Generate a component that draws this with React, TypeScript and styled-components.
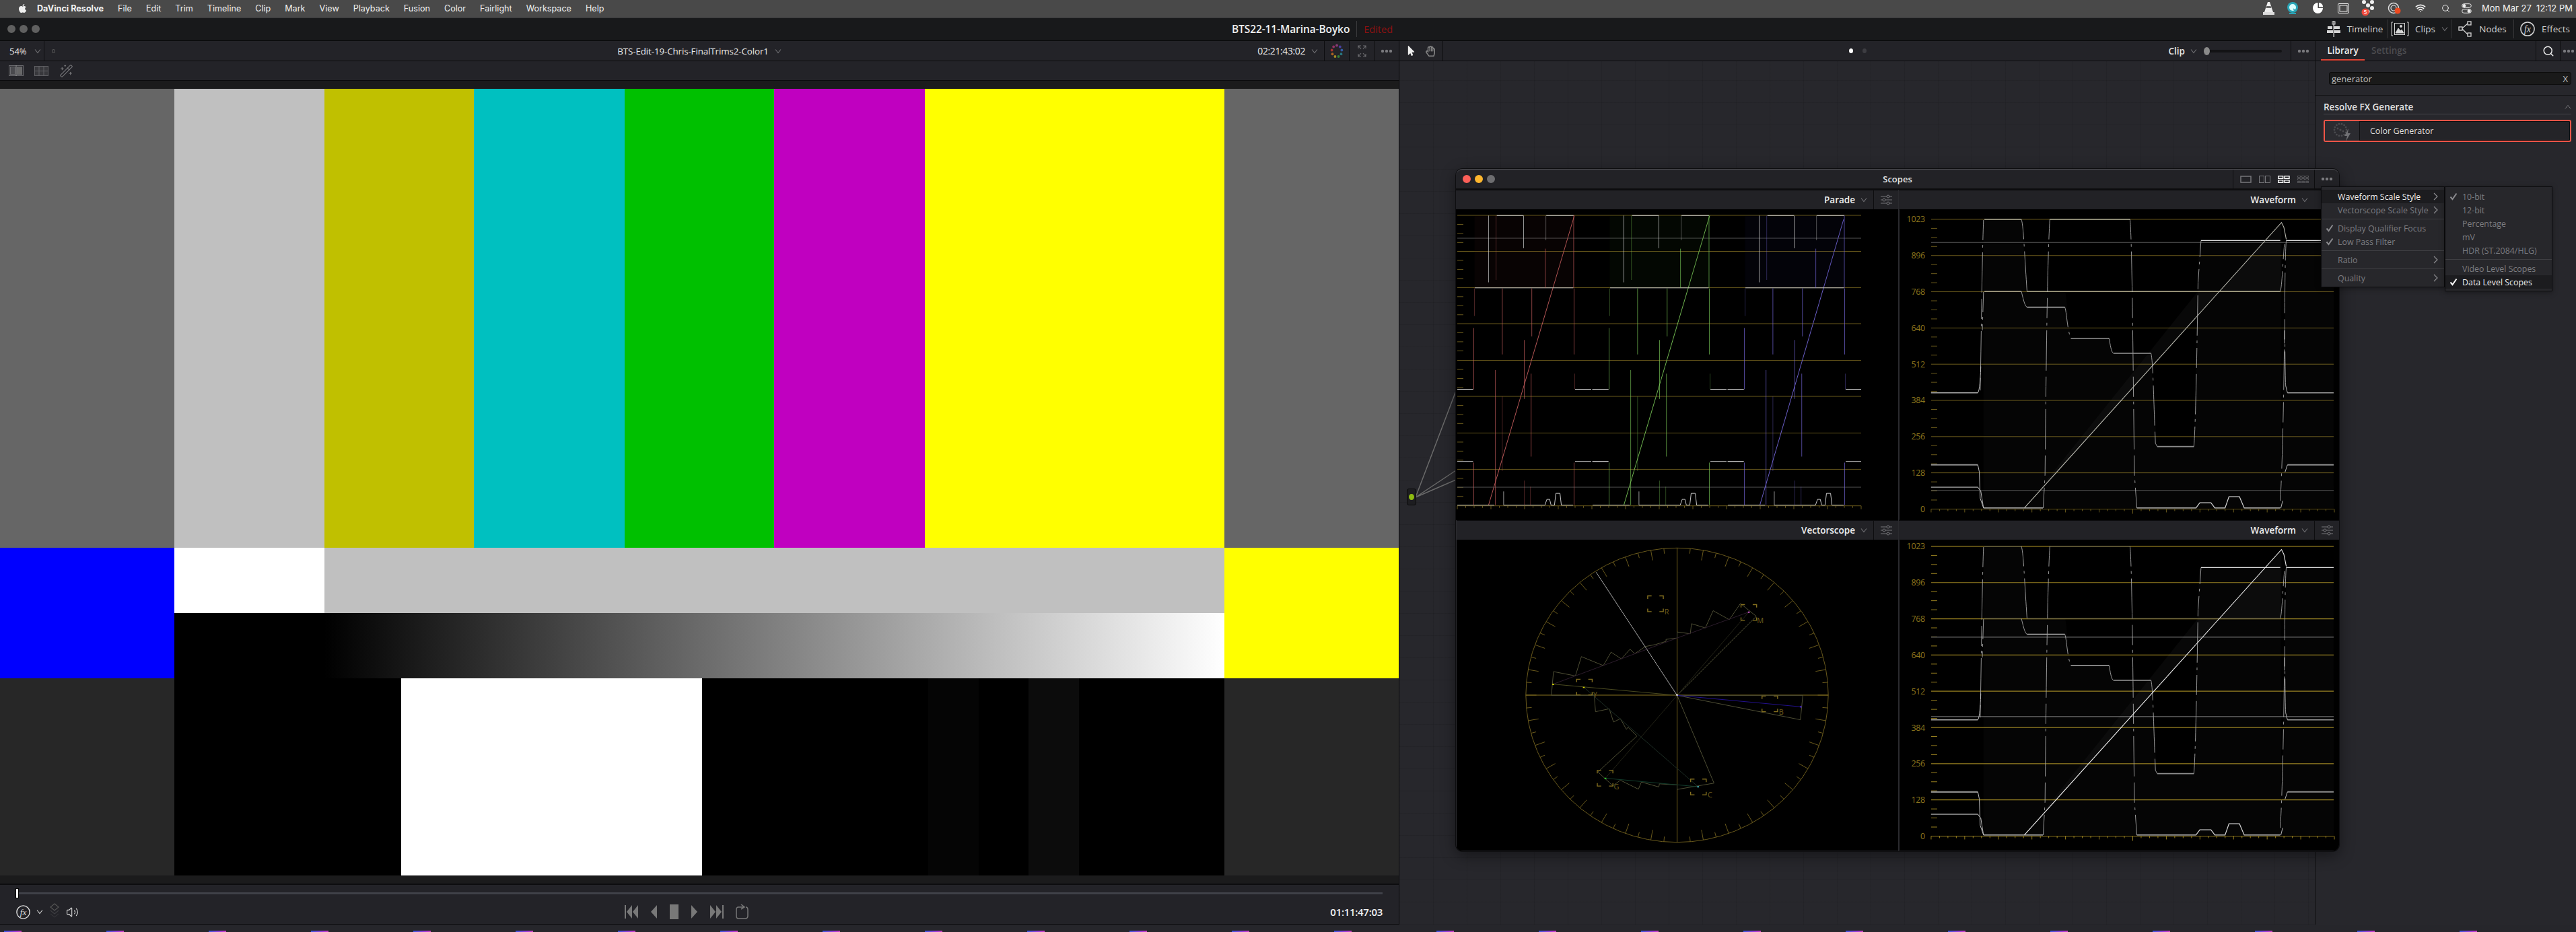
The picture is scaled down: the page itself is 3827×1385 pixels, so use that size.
import React from 'react';
import styled, { createGlobalStyle } from 'styled-components';
import { FaApple, FaMousePointer, FaRegHandPaper } from 'react-icons/fa';
import { Search, Wifi, WandSparkles, Volume2 } from 'lucide-react';

const Global = createGlobalStyle`
  html, body { margin: 0; padding: 0; background: #26262b; overflow: hidden; }
  * { box-sizing: border-box; }
  #root { width: 3827px; height: 1385px; }
`;

const UI = `"Open Sans", "Noto Sans", sans-serif`;

const Page = styled.div`
  width: 3827px; height: 1385px; display: flex; flex-direction: column; overflow: hidden;
  font-family: ${UI}; color: #ddd; background: #26262b;
`;

/* ---------- macOS menu bar ---------- */
const MenuBar = styled.div`
  height: 26px; flex: none; display: flex; align-items: center; padding: 0 5px 1px 26px;
  background: #494949; border-bottom: 1px solid #6c6c6c; font-family: Inter, sans-serif; font-size: 12.6px; color: #f0f0f0;
`;
const MenuItems = styled.div`display: flex; gap: 21px; align-items: center; margin-left: 14px;`;
const AppName = styled.span`font-weight: 700;`;
const Tray = styled.div`margin-left: auto; display: flex; align-items: center; color: #f2f2f2;`;
const TraySlot = styled.span<{ $w: number }>`
  width: ${p => p.$w}px; display: flex; align-items: center; justify-content: center; position: relative;
`;
const Clock = styled.span`margin-left: 10px; white-space: pre; font-size: 13px;`;

/* ---------- project title bar ---------- */
const TitleBar = styled.div`
  height: 35px; flex: none; display: flex; align-items: center; background: #18191b; border-bottom: 1px solid #08080a; position: relative;
`;
const TitleLeft = styled.div`width: 1830px; flex: none; display: flex; gap: 6px; padding-left: 11px;`;
const GreyDot = styled.span`width: 12px; height: 12px; border-radius: 50%; background: #606060;`;
const ProjectName = styled.span`font-size: 15.5px; font-weight: 600; color: #eee; letter-spacing: -0.1px;`;
const Sep = styled.span`width: 1px; height: 24px; background: #3a3a3c; margin: 0 10px;`;
const Edited = styled.span`font-size: 14.5px; color: #8d1111;`;
const PageTabs = styled.div`margin-left: auto; display: flex; align-items: center; height: 100%; font-size: 13.5px; color: #cfcfcf;`;
const PageTab = styled.div<{ $w: number; $gap?: number }>`
  width: ${p => p.$w}px; height: 28px; display: flex; align-items: center; justify-content: center; gap: ${p => p.$gap ?? 10}px;
  & + & { border-left: 1px solid #38383a; }
`;
const Chev = styled.svg`flex: none;`;

/* ---------- main ---------- */
const Main = styled.div`flex: 1; display: flex; position: relative; min-height: 0;`;
const ViewerCol = styled.div`width: 2079px; flex: none; display: flex; flex-direction: column; border-right: 1px solid #0e0e10; background: #232328;`;
const NodeCol = styled.div`width: 1361px; flex: none; display: flex; flex-direction: column; border-right: 1px solid #0e0e10;`;
const InspectorCol = styled.div`flex: 1; display: flex; flex-direction: column; background: #27272c;`;

const Toolbar = styled.div`height: 30px; flex: none; background: #232328; border-bottom: 1px solid #0b0b0d;`;
const ViewerToolbar = styled(Toolbar)`display: grid; grid-template-columns: 1fr auto 1fr; align-items: stretch;`;
const ToolLeft = styled.div`display: flex; align-items: center;`;
const ZoomCell = styled.div`width: 66px; height: 100%; display: flex; align-items: center; gap: 11px; padding-left: 14px; border-right: 1px solid #0d0d0f; font-size: 13px; color: #e6e6e6;`;
const TinyDot = styled.span`width: 5px; height: 6px; border-radius: 50%; border: 1px solid #555; margin-left: 11px;`;
const ClipTitle = styled.div`display: flex; align-items: center; gap: 9px; font-size: 13.4px; color: #e9e9e9; letter-spacing: -0.12px;`;
const ToolRight = styled.div`display: flex; justify-content: flex-end; align-items: center;`;
const Timecode = styled.div`display: flex; align-items: center; gap: 9px; font-size: 14px; font-weight: 500; color: #eee; padding-right: 9px; letter-spacing: -0.4px;`;
const ToolCell = styled.div<{ $w: number; $push?: boolean }>`
  width: ${p => p.$w}px; height: 100%; display: flex; align-items: center; justify-content: center; border-left: 1px solid #0d0d0f; flex: none;
  margin-left: ${p => (p.$push ? 'auto' : '0')};
`;
const SubBar = styled.div`height: 29px; flex: none; background: #232328; border-bottom: 1px solid #0b0b0d; display: flex; align-items: center; gap: 16px; padding-left: 13px;`;
const Strip = styled.div`height: 12px; flex: none; background: #1b1b1c;`;

/* ---------- colour bars ---------- */
const Video = styled.div`
  height: 1169px; flex: none; background: #000; display: grid;
  grid-template-columns: 259px 223px 222px 224px 222px 224px 445px 259px;
  grid-template-rows: 682px 97px 97px 293px;
`;
const Bar = styled.div<{ $c: string; $col?: string; $row?: string }>`
  background: ${p => p.$c}; grid-column: ${p => p.$col ?? 'auto'}; grid-row: ${p => p.$row ?? 'auto'};
`;
const PlugeRow = styled.div`
  grid-column: 2 / 8; grid-row: 4; display: grid; grid-template-columns: 337px 447px 336px 75px 74px 75px 216px; background: #000;
`;
const PlugeCell = styled.div<{ $c: string }>`background: ${p => p.$c};`;

/* ---------- transport ---------- */
const Transport = styled.div`
  height: 61px; flex: none; background: #232328; border-top: 2px solid #0d0d0f; border-bottom: 1px solid #0d0d0f; padding: 0 24px;
  display: flex; flex-direction: column;
`;
const Scrub = styled.div`height: 3px; background: #3f4148; margin-top: 11px; position: relative; flex: none;`;
const Playhead = styled.span`position: absolute; left: 0; top: -5px; width: 3px; height: 13px; background: #fff; outline: 1px solid #000;`;
const TransportRow = styled.div`display: grid; grid-template-columns: 904px auto 1fr; align-items: center; margin-top: 12px;`;
const Audio = styled.div`display: flex; align-items: center; gap: 9px; color: #ddd;`;
const PlayBtns = styled.div`display: flex; align-items: center; gap: 18px; color: #777;`;
const EndTC = styled.div`justify-self: end; font-size: 15px; font-weight: 600; color: #f0f0f0; letter-spacing: -0.3px;`;

/* ---------- node canvas ---------- */
const NodeBar = styled(Toolbar)`display: flex; align-items: center; position: relative;`;
const ToolsCell = styled.div`width: 65px; height: 100%; border-right: 1px solid #0d0d0f; display: flex; align-items: center; justify-content: center; gap: 13px;`;
const PageDots = styled.div`margin-left: 603px; display: flex; gap: 14px; align-items: center;`;
const PageDot = styled.span<{ $on?: boolean }>`width: 6px; height: 7px; border-radius: 50%; background: ${p => (p.$on ? '#fff' : '#3d3d42')};`;
const ClipCtl = styled.div`margin-left: auto; display: flex; align-items: center; height: 100%; font-size: 13.5px; color: #e6e6e6;`;
const ClipLabel = styled.span`display: flex; align-items: center; gap: 8px; font-weight: 600;`;
const SliderTrack = styled.div`width: 112px; height: 4px; background: #131315; border-radius: 2px; margin: 0 13px 0 14px; position: relative;`;
const SliderKnob = styled.span`position: absolute; left: -4px; top: -4px; width: 9px; height: 12px; border-radius: 50%; background: #8a8a8a;`;
const Canvas = styled.div`
  flex: 1; position: relative; background-color: #27272c;
  background-image:
    repeating-linear-gradient(90deg, rgba(0,0,0,.09) 0 1px, transparent 1px 50px),
    repeating-linear-gradient(0deg, rgba(0,0,0,.09) 0 1px, transparent 1px 33px);
`;
const Wires = styled.svg`position: absolute; left: 0; top: 0; pointer-events: none;`;
const Node = styled.div`
  position: absolute; left: 11px; top: 635px; width: 14px; height: 25px; border-radius: 3px; background: #1d1d20; border: 1px solid #0a0a0a;
  display: flex; align-items: center; justify-content: center;
`;
const NodeDot = styled.span`width: 8px; height: 9px; border-radius: 50%; background: #8dbb10;`;

/* ---------- inspector ---------- */
const InspectorBar = styled(Toolbar)`display: flex; align-items: stretch;`;
const Tab = styled.div<{ $on?: boolean }>`
  display: flex; align-items: center; justify-content: center; padding: 0 10px; font-size: 13.5px; font-weight: 600;
  color: ${p => (p.$on ? '#eee' : '#4c4c50')}; border-bottom: ${p => (p.$on ? '2px solid #e2493b' : '2px solid transparent')};
`;
const TabLib = styled(Tab)`margin-left: 8px; width: 65px;`;
const SearchArea = styled.div`height: 51px; flex: none; padding: 16px 7px 0 20px; border-bottom: 1px solid #0f0f11;`;
const SearchBox = styled.div`
  height: 19px; background: #1a1a1a; border: 1px solid #0c0c0c; border-radius: 3px; display: flex; align-items: center; justify-content: space-between;
  padding: 0 4px 0 3px; font-size: 13px; color: #bbb;
`;
const FxHead = styled.div`margin: 0 7px 0 12px; height: 28px; display: flex; align-items: center; justify-content: space-between; border-bottom: 1px solid #47474b; font-size: 13.5px; font-weight: 600; color: #e4e4e4; padding-top: 6px;`;
const FxRow = styled.div`
  margin: 8px 7px 0 12px; height: 33px; display: flex; align-items: stretch; border: 2px solid #ef5548; border-radius: 3px; background: #242428;
  font-size: 12.5px; color: #ddd; box-shadow: inset 0 0 0 1px #0e0e10;
`;
const FxThumb = styled.div`width: 52px; background: #2b2b30; border-right: 1px solid #0e0e10; display: flex; align-items: center; justify-content: center;`;
const FxName = styled.div`display: flex; align-items: center; padding-left: 15px;`;

/* ---------- scopes window ---------- */
const ScopesWin = styled.div`
  position: absolute; left: 2163px; top: 190px; width: 1312px; height: 1014px; background: #222226; border-radius: 10px;
  box-shadow: 0 0 0 1px #0e0e10, 0 6px 22px rgba(0,0,0,.45); display: flex; flex-direction: column; overflow: visible;
`;
const WinTitle = styled.div`
  height: 31px; flex: none; display: grid; grid-template-columns: 1fr auto 1fr; align-items: center; border-bottom: 2px solid #0c0c0e;
  border-top: 1px solid #505055; border-radius: 10px 10px 0 0; font-size: 13px; font-weight: 600; color: #e4e4e4;
`;
const Lights = styled.div`display: flex; gap: 6px; padding-left: 10px;`;
const Light = styled.span<{ $c: string }>`width: 12px; height: 12px; border-radius: 50%; background: ${p => p.$c};`;
const WinIcons = styled.div`justify-self: end; display: flex; align-items: center; height: 100%;`;
const LayoutCell = styled.div`width: 121px; height: 100%; display: flex; align-items: center; justify-content: center; gap: 11px; border-left: 1px solid #0d0d0f; padding-left: 2px;`;
const MoreCell = styled.div`width: 37px; height: 100%; display: flex; align-items: center; justify-content: center; border-left: 1px solid #0d0d0f;`;
const ScopeGrid = styled.div`flex: 1; display: grid; grid-template-columns: 657px 655px; grid-template-rows: 491px 491px; overflow: hidden; border-radius: 0 0 10px 10px;`;
const Scope = styled.div`display: flex; flex-direction: column; min-width: 0; & + & { border-left: 1px solid #2a2a2e; }`;
const ScopeHead = styled.div`height: 29px; flex: none; display: flex; justify-content: flex-end; align-items: center; background: #222226; border-top: 1px solid #0c0c0e; font-size: 13.5px; font-weight: 600; color: #eee;`;
const ScopeName = styled.div<{ $pad?: number }>`display: flex; align-items: center; gap: 8px; padding-right: ${p => p.$pad ?? 9}px; height: 100%;`;
const SlidersCell = styled.div`width: 37px; height: 100%; display: flex; align-items: center; justify-content: center; border-left: 1px solid #0d0d0f;`;
const ScopeBody = styled.svg`display: block; flex: 1; width: 100%; background: #000;`;

/* ---------- menu ---------- */
const MenuWrap = styled.div`position: absolute; left: 1285px; top: 26px; display: flex; align-items: flex-start; z-index: 3;`;
const Menu = styled.div<{ $w: number }>`
  width: ${p => p.$w}px; background: #27272b; border: 1px solid #0b0b0d; padding: 4px 0 3px; box-shadow: 0 2px 8px rgba(0,0,0,.35);
`;
const Row = styled.div<{ $hi?: boolean; $on?: boolean; $pad: number }>`
  height: 20px; display: flex; align-items: center; position: relative; padding-left: ${p => p.$pad}px; padding-right: 9px;
  color: ${p => (p.$on ? '#eee' : '#7c7c80')}; background: ${p => (p.$hi ? '#1c1c1f' : 'transparent')};
  font-size: 12.4px;
`;
const Arrow = styled.svg`margin-left: auto;`;
const Check = styled.svg<{ $x: number }>`position: absolute; left: ${p => p.$x}px; top: 4px;`;
const Divider = styled.div`height: 1px; background: #3f3f43; margin: 3px 0;`;

/* ---------- dock sliver ---------- */
const Dock = styled.div`height: 11px; flex: none; background: #26262b; display: flex; align-items: flex-end; gap: 126px; padding-left: 6px; overflow: hidden;`;
const DockIcon = styled.span`width: 26px; height: 2px; flex: none; background: linear-gradient(90deg, #3a55d8, #a23ad8 70%, #d040c0);`;

/* ---------- small drawings ---------- */
const Down = ({ c = '#6f6f73' }: { c?: string }) => (
  <Chev width="10" height="8" viewBox="0 0 10 8"><path d="M1 1.5 5 6.5 9 1.5" fill="none" stroke={c} strokeWidth="1.1" /></Chev>
);
const Dots = ({ c = '#7a7a7e' }: { c?: string }) => (
  <svg width="18" height="6" viewBox="0 0 18 6"><circle cx="3" cy="3" r="2.2" fill={c} /><circle cx="9" cy="3" r="2.2" fill={c} /><circle cx="15" cy="3" r="2.2" fill={c} /></svg>
);
const SliderIco = () => (
  <svg width="17" height="16" viewBox="0 0 17 16" stroke="#77777b" fill="#222226" strokeWidth="1">
    <path d="M0 3H17M0 8H17M0 13H17" /><circle cx="11" cy="3" r="2" /><circle cx="5" cy="8" r="2" /><circle cx="11" cy="13" r="2" />
  </svg>
);
const FxIcon = ({ s, c }: { s: number; c: string }) => (
  <svg width={s} height={s} viewBox="0 0 24 24"><circle cx="12" cy="12" r="11" fill="none" stroke={c} strokeWidth="1.6" />
    <text x="12" y="17" textAnchor="middle" fontFamily="'Liberation Serif', serif" fontStyle="italic" fontSize="15" fill={c}>fx</text></svg>
);
const ColorWheel = () => {
  const cols = ['#8a3a76', '#4a3fa0', '#325ca4', '#27767f', '#32803a', '#a68a24', '#ad6223', '#a73530', '#943265'];
  return (
    <svg width="20" height="22" viewBox="-10 -11 20 22">
      {cols.map((c, i) => { const a = (i / cols.length) * Math.PI * 2 - Math.PI / 2; return <circle key={c} cx={Math.cos(a) * 7.5} cy={Math.sin(a) * 8.5} r="1.9" fill={c} />; })}
    </svg>
  );
};
const ExpandIco = () => (
  <svg width="13" height="18" viewBox="0 0 13 18" fill="none" stroke="#6a6a6e" strokeWidth="1.2">
    <path d="M1 5V1H5M8 1H12V5M1 13V17H5M12 13V17H8M1 1 5 6M12 1 8 6M1 17 5 12M12 17 8 12" />
  </svg>
);
const DualIco = () => (
  <svg width="22" height="16" viewBox="0 0 22 16" fill="#4a4a4e" stroke="#6a6a6e" strokeWidth="1">
    <rect x=".5" y=".5" width="21" height="15" fill="#2e2e32" /><rect x="2.5" y="2.5" width="7" height="11" /><rect x="12.5" y="2.5" width="7" height="11" fill="#666" /><path d="M11 0V16" stroke="#999" />
  </svg>
);
const GridIco = () => (
  <svg width="21" height="15" viewBox="0 0 21 15" stroke="#606064" fill="#38383c"><rect x=".5" y=".5" width="20" height="14" /><path d="M7 .5V14.5M14 .5V14.5M.5 7.5H20.5" /></svg>
);
const TimelineIco = () => (
  <svg width="20" height="24" viewBox="0 0 20 24" fill="#d6d6d6"><rect x="9.5" y="0" width="1.4" height="24" /><rect x="8" y="1" width="4" height="4" fill="none" stroke="#d6d6d6" /><rect x="1" y="8" width="7" height="4" /><rect x="11" y="8" width="8" height="4" /><rect x="0" y="14" width="9" height="4" /><rect x="11" y="14" width="9" height="4" /></svg>
);
const ClipsIco = () => (
  <svg width="27" height="22" viewBox="0 0 27 22" fill="none" stroke="#d6d6d6"><path d="M3 1H1V21H3M24 1H26V21H24" /><rect x="5.5" y="2.5" width="15" height="17" /><path d="M7 17 11 10 14 14 16 12 19 17Z" fill="#d6d6d6" /><circle cx="15" cy="7" r="1.5" fill="#d6d6d6" /></svg>
);
const NodesIco = () => (
  <svg width="21" height="24" viewBox="0 0 21 24" fill="none" stroke="#d6d6d6" strokeWidth="1.3"><rect x="1" y="9" width="5" height="5" /><rect x="14" y="1" width="5" height="5" /><rect x="14" y="18" width="5" height="5" /><path d="M6 11 14 4M6 12 14 20" /></svg>
);
const FxThumbIco = () => (
  <svg width="30" height="30" viewBox="0 0 30 30"><g fill="#4a4a4e">{Array.from({ length: 14 }, (_, i) => { const a = i / 14 * Math.PI * 2; return <circle key={i} cx={12 + Math.cos(a) * 9} cy={13 + Math.sin(a) * 9} r="1.4" />; })}<circle cx="12" cy="13" r="1.6" /><circle cx="8" cy="11" r="1.4" /><circle cx="16" cy="15" r="1.4" /></g><path d="M24 11 18 22H22L20 30 27 18H23Z" fill="#707074" /></svg>
);
const Layers = () => (
  <svg width="16" height="28" viewBox="0 0 16 28" fill="none" stroke="#555" strokeWidth="1.2"><path d="M8 2 14 7 8 12 2 7Z" /><path d="M2 12 8 17 14 12" stroke="#3f3f43" /><path d="M2 17 8 22 14 17" stroke="#333337" /></svg>
);
const TIcon = ({ kind }: { kind: string }) => {
  const c = '#787878';
  const m: Record<string, React.ReactNode> = {
    first: <><rect x="0" y="1" width="2" height="20" fill={c} /><path d="M11 1 3 11 11 21ZM20 1 12 11 20 21Z" fill={c} /></>,
    prev: <path d="M10 1 1 11 10 21Z" fill={c} />,
    stop: <rect x="0" y="0" width="13" height="22" fill={c} />,
    next: <path d="M1 1 10 11 1 21Z" fill={c} />,
    last: <><rect x="18" y="1" width="2" height="20" fill={c} /><path d="M0 1 8 11 0 21ZM9 1 17 11 9 21Z" fill={c} /></>,
    loop: <path d="M12 4H4Q1 4 1 8V17Q1 21 4 21H14Q18 21 18 17V8Q18 4 15 4M8 0 13 4 8 7" fill="none" stroke={c} strokeWidth="1.5" />,
  };
  const w = kind === 'first' || kind === 'last' || kind === 'loop' ? 20 : kind === 'stop' ? 13 : 11;
  return <svg width={w} height="22" viewBox={`0 0 ${w} 22`}>{m[kind]}</svg>;
};

const LEVELS = ['1023', '896', '768', '640', '512', '384', '256', '128', '0'];

type Seg = { d: string; c: string; w: number; dimInBright?: boolean };
const SEGS: Seg[] = [
  { d: 'M152 960H308', c: '#aaa', w: 1.5 },
  { d: 'M152 1260H308', c: '#8c8c8c', w: 2.2 },
  { d: 'M152 1353H308', c: '#eee', w: 1.1 },
  { d: 'M330 237H453M548 237H815', c: '#e6e6da', w: 1.1, dimInBright: true },
  { d: 'M330 537H453M472 537H1316', c: '#e2e2d6', w: 1.1, dimInBright: true },
  { d: 'M472 603H598', c: '#b0b0b0', w: 1.4 },
  { d: 'M618 732H745', c: '#eee', w: 1.1 },
  { d: 'M760 795H885', c: '#9a9a9a', w: 1.6 },
  { d: 'M906 1184H1028', c: '#8c8c8c', w: 1.8 },
  { d: 'M1052 325H1316M1336 325H1494', c: '#d8d8d8', w: 1.2 },
  { d: 'M1340 960H1494', c: '#999', w: 1.5 },
  { d: 'M1340 1260H1494', c: '#8c8c8c', w: 2 },
  { d: 'M327 1440H525M838 1440H1035L1048 1418H1085L1098 1440H1132L1145 1393H1180L1196 1440H1316', c: '#d4d4d4', w: 1.2 },
  { d: 'M308 960C313 950 316 920 318 850M308 1260 313 1290M308 1353 318 1370 327 1440M313 1290 316 1400 327 1440M1340 960 1334 930M1340 1260 1332 1290M1318 1440 1324 1410', c: '#bbb', w: 1 },
];
const EDGES = [
  'M327 240C322 400 320 700 316 950',
  'M327 540 323 700',
  'M548 237C540 400 536 800 532 1300L526 1440',
  'M815 237C822 300 825 800 830 1300L838 1440',
  'M453 237C460 260 462 350 472 537',
  'M453 537C458 560 464 600 472 603',
  'M598 603C604 620 606 700 618 732',
  'M745 732C750 760 752 790 760 795',
  'M885 795C892 820 894 1000 900 1170L906 1184',
  'M1028 1184C1034 1100 1038 800 1042 500L1052 325',
  'M1316 1410C1322 1300 1328 1000 1330 700',
  'M1336 325C1330 400 1330 800 1334 930',
  'M1316 537C1322 520 1325 400 1330 340',
];

const Waveform = ({ y0, bright }: { y0: number; bright: boolean }) => {
  const top = y0 + 14.6;
  const step = 53.9;
  const grid = bright ? '#9a8220' : '#6a5a1c';
  const gray = bright ? '#8c8c8c' : '#555';
  const grayY = bright ? [947.7, 1066] : [y0 + 49, y0 + 418];
  const ticks: React.ReactNode[] = [];
  LEVELS.forEach((l, i) => {
    const y = top + i * step;
    ticks.push(<line key={l} x1="2868" x2="3467" y1={y} y2={y} stroke={grid} strokeWidth={bright ? 1.2 : 1} />);
    ticks.push(<text key={`t${l}`} x="2859" y={y + 4.5} textAnchor="end" fontFamily={UI} fontSize="12.5" fill="#8d751d" letterSpacing="-0.3">{l}</text>);
    if (i < 8) [1, 2, 3].forEach(k => ticks.push(<line key={`${l}-${k}`} x1="2868" x2="2877" y1={y + k * step / 4} y2={y + k * step / 4} stroke={grid} />));
  });
  const base = top + 8 * step;
  for (let k = 0; k <= 48; k++) {
    const x = 2868 + k * 12.5;
    const len = k === 24 ? 7 : k % 4 === 0 ? 5 : 3;
    ticks.push(<line key={`x${k}`} x1={x} x2={x} y1={base} y2={base + len} stroke={grid} />);
  }
  return (
    <>
      {ticks}
      {grayY.map(y => <line key={y} x1="2868" x2="3467" y1={y} y2={y} stroke={gray} />)}
      <g transform={`translate(2800 ${y0 - 70}) scale(${1 / 2.24} ${1 / 2.8})`} fill="none">
        <path d="M327 1440V240H455L472 540H600L618 735H750L760 800H885L905 1185H1028L1045 330H1316L1320 1440L1336 325H1494V1440Z" fill="rgba(255,255,255,.018)" stroke="none" />
        <path d="M463 1440 1320 250V540L1040 540Z" fill="rgba(255,255,255,.03)" stroke="none" />
        {EDGES.map(d => (
          <path key={d} d={d} stroke="#a8a8a8" strokeWidth=".9" strokeDasharray="30 7 4 7 60 9" vectorEffect="non-scaling-stroke" />
        ))}
        {SEGS.map(s => (
          <path key={s.d} d={s.d} stroke={s.dimInBright && bright ? '#56564e' : s.c} strokeWidth={s.w} vectorEffect="non-scaling-stroke" />
        ))}
        <path d="M463 1440L1320 250L1328 270L1336 320" stroke={bright ? '#eee' : '#b8b8ae'} strokeWidth="1.1" vectorEffect="non-scaling-stroke" />
      </g>
    </>
  );
};

const CHANNELS = [
  { dx: 0, c: '#c96060', dim: '#5a2020', ramp: 'M238 1427L488 222' },
  { dx: 394, c: '#7ac858', dim: '#234a1a', ramp: 'M632 1427L882 222' },
  { dx: 788, c: '#7568dc', dim: '#241f60', ramp: 'M1028 1427L1272 238' },
];
const VERTS: [number, number, number][] = [
  [197, 525, 640], [195, 690, 945], [238, 222, 500], [260, 222, 490], [258, 865, 1427], [278, 525, 800], [278, 975, 1285], [340, 222, 358],
  [342, 740, 985], [342, 1325, 1427], [362, 880, 1225], [364, 525, 725], [405, 222, 325], [403, 360, 523], [487, 525, 800], [489, 880, 945], [486, 222, 523],
  [282, 1370, 1427], [360, 1350, 1427], [195, 1250, 1427], [487, 1250, 1427],
];

const Parade = () => {
  const gy = [319, 372.5, 426.4, 480, 534.6, 588, 642.5, 696.4, 750.7];
  const grid = '#6a5a1c';
  return (
    <ScopeBody viewBox="2163 310 657 462">
      <defs><clipPath id="paradeClip"><rect x="2163" y="310" width="602" height="462" /></clipPath></defs>
      {gy.map((y, i) => (
        <g key={y}>
          <line x1="2165" x2="2765" y1={y} y2={y} stroke={grid} />
          {i < 8 && [1, 2, 3].map(k => <line key={k} x1="2165" x2="2174" y1={y + k * 13.45} y2={y + k * 13.45} stroke={grid} />)}
        </g>
      ))}
      {Array.from({ length: 49 }, (_, k) => { const x = 2165 + k * 12.5; return <line key={k} x1={x} x2={x} y1="750.7" y2={750.7 + (k % 4 === 0 ? 5 : 3)} stroke={grid} />; })}
      <line x1="2165" x2="2765" y1="353" y2="353" stroke="#555" />
      <line x1="2165" x2="2765" y1="723" y2="723" stroke="#555" />
      <g clipPath="url(#paradeClip)">
        <g transform={`translate(2090 240) scale(${1 / 1.96} ${1 / 2.8})`}>
          {CHANNELS.map(ch => (
            <g key={ch.dx}>
              <path d={ch.ramp} stroke={ch.c} strokeWidth=".9" vectorEffect="non-scaling-stroke" fill="none" />
              <g transform={`translate(${ch.dx} 0)`}>
                <rect x="197" y="222" width="290" height="301" fill={ch.dim} opacity=".09" />
                <path d="M262 222H339M406 222H486M198 523H485M147 945H193M490 945H537M540 945H587M147 1245H193M490 1245H537M540 1245H587M147 1427H255M282 1427H402L408 1403H416L420 1427H430L434 1378H446L450 1427H484"
                  stroke="#c8c8c8" strokeWidth="1" vectorEffect="non-scaling-stroke" fill="none" />
                {VERTS.map(([x, a, b], i) => (
                  <line key={i} x1={x} x2={x} y1={a} y2={b} stroke={i % 5 === 2 ? '#ddd' : ch.c} strokeWidth=".8" vectorEffect="non-scaling-stroke" opacity={i % 3 === 0 ? 0.45 : 0.85} />
                ))}
              </g>
            </g>
          ))}
        </g>
      </g>
    </ScopeBody>
  );
};

const Target = ({ x, y }: { x: number; y: number }) => {
  const hw = 26; const hh = 35; const a = 13;
  const s = (sx: number, sy: number) => `M${x + sx * hw} ${y + sy * (hh - a)}V${y + sy * hh}H${x + sx * (hw - a)}`;
  return <path d={`${s(-1, -1)}${s(1, -1)}${s(-1, 1)}${s(1, 1)}`} fill="none" stroke="#85701f" strokeWidth="1.4" vectorEffect="non-scaling-stroke" />;
};

const Vector = () => {
  const cx = 2491; const cy = 1034; const rx = 225; const ry = 219;
  const col = '#6a5a1c';
  const ticks = Array.from({ length: 72 }, (_, i) => {
    const a = (i * 5 * Math.PI) / 180;
    const l = i % 2 === 0 ? 0.07 : 0.035;
    return (
      <line key={i} x1={cx + Math.cos(a) * rx} y1={cy + Math.sin(a) * ry} x2={cx + Math.cos(a) * rx * (1 - l)} y2={cy + Math.sin(a) * ry * (1 - l)} stroke={col} />
    );
  });
  const labels: [string, number, number][] = [['R', 722, 432], ['M', 1030, 470], ['Y', 484, 802], ['B', 1103, 880], ['G', 553, 1212], ['C', 866, 1250]];
  const dots: [number, number, string][] = [[351, 743, '#ff0'], [453, 757, '#dd0'], [1003, 421, '#f6f'], [1176, 844, '#5a2cff'], [525, 1163, '#2fe02f'], [834, 1201, '#4fd8e8'], [764, 791, '#fff']];
  return (
    <ScopeBody viewBox="2163 803 657 462">
      <ellipse cx={cx} cy={cy} rx={rx} ry={ry} fill="none" stroke={col} />
      {ticks}
      <line x1={cx} x2={cx} y1={cy - ry} y2={cy + ry} stroke="#7e6a1d" />
      <line x1={cx - rx} x2={cx + rx} y1={cy} y2={cy} stroke="#8a7520" strokeWidth="1.2" />
      <g transform={`translate(2150 770) scale(${1 / 2.24} ${1 / 3})`} fill="none">
        <path d="M345 793L352 687L425 706L445 620L518 660L544 600L578 630L607 587L623 607L658 575L692 566L727 552V543L764 537V510L808 518L812 473L858 492L884 415L938 455L975 383L1028 440L764 793L1175 902L1183 793H764L887 1185L764 1213V1193L705 1188L703 1202L645 1180L635 1212L575 1172L550 1197L500 1135L630 975L600 935L595 945L575 897L552 912L538 853L492 866L488 793Z"
          stroke="#4e4e34" strokeWidth="1" vectorEffect="non-scaling-stroke" />
        <path d="M494 243L764 793" stroke="#a8a8a8" strokeWidth="1" vectorEffect="non-scaling-stroke" />
        <path d="M351 743L764 793" stroke="#4a4a20" vectorEffect="non-scaling-stroke" />
        <path d="M351 743L764 537L1003 421" stroke="#2c1c2c" vectorEffect="non-scaling-stroke" />
        <path d="M1003 421L764 793L525 1163" stroke="#222216" vectorEffect="non-scaling-stroke" />
        <path d="M764 793L1176 844" stroke="#22108c" vectorEffect="non-scaling-stroke" />
        <path d="M525 1163L834 1201" stroke="#123c2c" vectorEffect="non-scaling-stroke" />
        <path d="M453 757L834 1201" stroke="#1c2c24" vectorEffect="non-scaling-stroke" />
        <Target x={692} y={384} />
        <Target x={1003} y={423} />
        <Target x={455} y={756} />
        <Target x={1073} y={831} />
        <Target x={524} y={1163} />
        <Target x={835} y={1202} />
        {dots.map(([x, y, c]) => <rect key={c} x={x - 3} y={y - 2} width="6" height="5" fill={c} />)}
      </g>
      {labels.map(([t, x, y]) => (
        <text key={t} x={2150 + x / 2.24} y={770 + y / 3} fontFamily={UI} fontSize="11" fill="#6d5c1d">{t}</text>
      ))}
    </ScopeBody>
  );
};

const Right = () => <Arrow width="7" height="12" viewBox="0 0 7 12"><path d="M1 1 6 6 1 11" fill="none" stroke="#8a8a8e" strokeWidth="1.2" /></Arrow>;
const Tick = ({ x, c }: { x: number; c: string }) => (
  <Check $x={x} width="12" height="12" viewBox="0 0 12 12"><path d="M1.5 6.5 4.5 10 10.5 1.5" fill="none" stroke={c} strokeWidth="2" /></Check>
);

export default function App() {
  return (
    <Page>
      <Global />
      <MenuBar>
        <FaApple size={15} />
        <MenuItems>
          <AppName>DaVinci Resolve</AppName>
          {['File', 'Edit', 'Trim', 'Timeline', 'Clip', 'Mark', 'View', 'Playback', 'Fusion', 'Color', 'Fairlight', 'Workspace', 'Help'].map(m => <span key={m}>{m}</span>)}
        </MenuItems>
        <Tray>
          <TraySlot $w={36}><svg width="17" height="19" viewBox="0 0 17 19"><path d="M7 0H10L15 15H2Z" fill="#eee" /><rect x="0" y="15" width="17" height="4" fill="#ddd" /><path d="M5.5 6H11.5L12.5 9H4.5Z" fill="#666" /></svg></TraySlot>
          <TraySlot $w={36}><svg width="16" height="20" viewBox="0 0 16 20"><circle cx="8" cy="9" r="8" fill="#2aa6b8" /><circle cx="8" cy="9" r="5" fill="#dff" /><path d="M3 18H13" stroke="#2aa6b8" strokeWidth="2" /><path d="M9 11 12 14" stroke="#2aa6b8" strokeWidth="1.5" /></svg></TraySlot>
          <TraySlot $w={38}><svg width="15" height="16" viewBox="0 0 15 16"><path d="M7.5 0A7.5 8 0 1 0 15 8H7.5Z" fill="#fff" /><path d="M9 0A6 6 0 0 1 15 6.5H9Z" fill="#fff" /></svg></TraySlot>
          <TraySlot $w={38}><svg width="17" height="15" viewBox="0 0 17 15" fill="none" stroke="#eee"><rect x=".5" y=".5" width="16" height="14" rx="1.5" /><rect x="3" y="3" width="11" height="9" /></svg></TraySlot>
          <TraySlot $w={36}><svg width="20" height="26" viewBox="0 0 20 26"><g fill="#eee"><circle cx="4" cy="4" r="3" /><circle cx="16" cy="4" r="3" /><circle cx="10" cy="9" r="3" /><circle cx="16" cy="13" r="3" /><circle cx="10" cy="18" r="2.5" /></g><circle cx="6" cy="19" r="5.5" fill="#ef4a3c" /><text x="6" y="22" textAnchor="middle" fontSize="8" fill="#fff" fontFamily="Inter, sans-serif">5</text></svg></TraySlot>
          <TraySlot $w={41}><svg width="20" height="18" viewBox="0 0 20 18"><circle cx="9" cy="9" r="7.5" fill="none" stroke="#ddd" strokeWidth="1.5" /><circle cx="9" cy="9" r="4" fill="none" stroke="#ddd" strokeWidth="1.2" /><circle cx="15" cy="13" r="4.5" fill="#ee4a20" /></svg></TraySlot>
          <TraySlot $w={38}><Wifi size={16} strokeWidth={2.4} /></TraySlot>
          <TraySlot $w={36}><Search size={13} strokeWidth={1.8} /></TraySlot>
          <TraySlot $w={26}><svg width="15" height="15" viewBox="0 0 15 15" fill="none" stroke="#eee"><rect x=".7" y=".7" width="13.6" height="5.6" rx="2.8" /><rect x=".7" y="8.7" width="13.6" height="5.6" rx="2.8" /><circle cx="4" cy="3.5" r="2" fill="#eee" /><circle cx="11" cy="11.5" r="2" fill="#eee" /></svg></TraySlot>
          <Clock>Mon Mar 27  12:12 PM</Clock>
        </Tray>
      </MenuBar>

      <TitleBar>
        <TitleLeft><GreyDot /><GreyDot /><GreyDot /></TitleLeft>
        <ProjectName>BTS22-11-Marina-Boyko</ProjectName>
        <Sep />
        <Edited>Edited</Edited>
        <PageTabs>
          <PageTab $w={97}><TimelineIco />Timeline</PageTab>
          <PageTab $w={94} $gap={9}><ClipsIco />Clips<Down /></PageTab>
          <PageTab $w={93}><NodesIco />Nodes</PageTab>
          <PageTab $w={93}><FxIcon s={22} c="#d6d6d6" />Effects</PageTab>
        </PageTabs>
      </TitleBar>

      <Main>
        <ViewerCol>
          <ViewerToolbar>
            <ToolLeft><ZoomCell>54%<Down /></ZoomCell><TinyDot /></ToolLeft>
            <ClipTitle>BTS-Edit-19-Chris-FinalTrims2-Color1<Down /></ClipTitle>
            <ToolRight>
              <Timecode>02:21:43:02<Down /></Timecode>
              <ToolCell $w={37}><ColorWheel /></ToolCell>
              <ToolCell $w={37}><ExpandIco /></ToolCell>
              <ToolCell $w={37}><Dots /></ToolCell>
            </ToolRight>
          </ViewerToolbar>
          <SubBar>
            <DualIco /><GridIco /><WandSparkles size={21} color="#767679" strokeWidth={1.3} />
          </SubBar>
          <Strip />
          <Video>
            <Bar $c="#666" /><Bar $c="#c0c0c0" /><Bar $c="#c0c000" /><Bar $c="#00c0c0" /><Bar $c="#00c000" /><Bar $c="#c000c0" /><Bar $c="#ff0" /><Bar $c="#666" />
            <Bar $c="#00f" $col="1" $row="2 / 4" />
            <Bar $c="#fff" $col="2" $row="2" />
            <Bar $c="#c0c0c0" $col="3 / 8" $row="2" />
            <Bar $c="#ff0" $col="8" $row="2 / 4" />
            <Bar $c="#000" $col="2" $row="3" />
            <Bar $c="linear-gradient(90deg,#000,#fff)" $col="3 / 8" $row="3" />
            <Bar $c="#272727" $col="1" $row="4" />
            <PlugeRow>
              <PlugeCell $c="#000" /><PlugeCell $c="#fff" /><PlugeCell $c="#000" /><PlugeCell $c="#050505" /><PlugeCell $c="#000" /><PlugeCell $c="#0c0c0c" /><PlugeCell $c="#000" />
            </PlugeRow>
            <Bar $c="#272727" $col="8" $row="4" />
          </Video>
          <Strip />
          <Transport>
            <Scrub><Playhead /></Scrub>
            <TransportRow>
              <Audio>
                <FxIcon s={21} c="#ddd" />
                <Down c="#ccc" />
                <Layers />
                <Volume2 size={19} strokeWidth={1.4} />
              </Audio>
              <PlayBtns>
                <TIcon kind="first" /><TIcon kind="prev" /><TIcon kind="stop" /><TIcon kind="next" /><TIcon kind="last" /><TIcon kind="loop" />
              </PlayBtns>
              <EndTC>01:11:47:03</EndTC>
            </TransportRow>
          </Transport>
        </ViewerCol>

        <NodeCol>
          <NodeBar>
            <ToolsCell>
              <FaMousePointer size={15} color="#eee" />
              <FaRegHandPaper size={16} color="#8a8a8a" />
            </ToolsCell>
            <PageDots><PageDot $on /><PageDot /></PageDots>
            <ClipCtl>
              <ClipLabel>Clip<Down /></ClipLabel>
              <SliderTrack><SliderKnob /></SliderTrack>
              <ToolCell $w={36}><Dots /></ToolCell>
            </ClipCtl>
          </NodeBar>
          <Canvas>
            <Wires width="100" height="700" viewBox="0 0 100 700">
              <path d="M24 648 84 490M24 648 84 608M24 648 84 622" stroke="#6a6a6a" strokeWidth="1.5" fill="none" />
            </Wires>
            <Node><NodeDot /></Node>
          </Canvas>
        </NodeCol>

        <InspectorCol>
          <InspectorBar>
            <TabLib $on>Library</TabLib>
            <Tab>Settings</Tab>
            <ToolCell $w={36} $push><Search size={18} color="#eee" strokeWidth={2} /></ToolCell>
            <ToolCell $w={24}><Dots /></ToolCell>
          </InspectorBar>
          <SearchArea><SearchBox>generator<span>X</span></SearchBox></SearchArea>
          <FxHead>Resolve FX Generate<svg width="10" height="8" viewBox="0 0 10 8"><path d="M1 6.5 5 1.5 9 6.5" fill="none" stroke="#7a7a7e" /></svg></FxHead>
          <FxRow><FxThumb><FxThumbIco /></FxThumb><FxName>Color Generator</FxName></FxRow>
        </InspectorCol>

        <ScopesWin>
          <WinTitle>
            <Lights><Light $c="#fb5f58" /><Light $c="#fdb62e" /><Light $c="#6e6e70" /></Lights>
            <span>Scopes</span>
            <WinIcons>
              <LayoutCell>
                <svg width="17" height="11" viewBox="0 0 17 11"><rect x="1" y="1" width="15" height="9" fill="none" stroke="#77777b" strokeWidth="1.5" /></svg>
                <svg width="17" height="11" viewBox="0 0 17 11" fill="none" stroke="#77777b"><rect x=".5" y=".5" width="7" height="10" /><rect x="9.5" y=".5" width="7" height="10" /></svg>
                <svg width="18" height="11" viewBox="0 0 18 11" fill="none" stroke="#fff" strokeWidth="1.4"><rect x=".7" y=".7" width="7" height="3.6" /><rect x="10" y=".7" width="7" height="3.6" /><rect x=".7" y="6.7" width="7" height="3.6" /><rect x="10" y="6.7" width="7" height="3.6" /></svg>
                <svg width="17" height="11" viewBox="0 0 17 11" fill="none" stroke="#66666a" strokeWidth=".8"><path d="M.5 .5H4.5V2.5H.5ZM6.5 .5H10.5V2.5H6.5ZM12.5 .5H16.5V2.5H12.5ZM.5 4.5H4.5V6.5H.5ZM6.5 4.5H10.5V6.5H6.5ZM12.5 4.5H16.5V6.5H12.5ZM.5 8.5H4.5V10.5H.5ZM6.5 8.5H10.5V10.5H6.5ZM12.5 8.5H16.5V10.5H12.5Z" /></svg>
              </LayoutCell>
              <MoreCell><Dots /></MoreCell>
            </WinIcons>
          </WinTitle>
          <ScopeGrid>
            <Scope>
              <ScopeHead><ScopeName>Parade<Down /></ScopeName><SlidersCell><SliderIco /></SlidersCell></ScopeHead>
              <Parade />
            </Scope>
            <Scope>
              <ScopeHead><ScopeName $pad={46}>Waveform<Down /></ScopeName></ScopeHead>
              <ScopeBody viewBox="2820 310 655 462"><rect x="2820" y="310" width="1" height="462" fill="#2a2a2e" /><Waveform y0={310} bright={false} /></ScopeBody>
            </Scope>
            <Scope>
              <ScopeHead><ScopeName>Vectorscope<Down /></ScopeName><SlidersCell><SliderIco /></SlidersCell></ScopeHead>
              <Vector />
            </Scope>
            <Scope>
              <ScopeHead><ScopeName>Waveform<Down /></ScopeName><SlidersCell><SliderIco /></SlidersCell></ScopeHead>
              <ScopeBody viewBox="2820 803 655 462"><rect x="2820" y="803" width="1" height="462" fill="#2a2a2e" /><Waveform y0={798} bright /></ScopeBody>
            </Scope>
          </ScopeGrid>
          <MenuWrap>
            <Menu $w={184}>
              <Row $hi $on $pad={24}>Waveform Scale Style<Right /></Row>
              <Row $pad={24}>Vectorscope Scale Style<Right /></Row>
              <Divider />
              <Row $pad={24}><Tick x={6} c="#8a8a8e" />Display Qualifier Focus</Row>
              <Row $pad={24}><Tick x={6} c="#8a8a8e" />Low Pass Filter</Row>
              <Divider />
              <Row $pad={24}>Ratio<Right /></Row>
              <Divider />
              <Row $pad={24}>Quality<Right /></Row>
            </Menu>
            <Menu $w={160}>
              <Row $pad={25}><Tick x={6} c="#8a8a8e" />10-bit</Row>
              <Row $pad={25}>12-bit</Row>
              <Row $pad={25}>Percentage</Row>
              <Row $pad={25}>mV</Row>
              <Row $pad={25}>HDR (ST.2084/HLG)</Row>
              <Divider />
              <Row $pad={25}>Video Level Scopes</Row>
              <Row $pad={25} $hi $on><Tick x={6} c="#fff" />Data Level Scopes</Row>
            </Menu>
          </MenuWrap>
        </ScopesWin>
      </Main>

      <Dock>{Array.from({ length: 25 }, (_, i) => <DockIcon key={i} />)}</Dock>
    </Page>
  );
}
